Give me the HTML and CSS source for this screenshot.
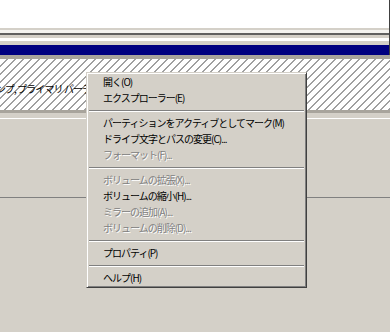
FILE: index.html
```html
<!DOCTYPE html>
<html lang="ja">
<head>
    <meta charset="UTF-8">
    <title>ディスクの管理</title>
    <link rel="stylesheet" href="styles.css">
</head>
<body>
    <div class="top-pane"></div>
    <div class="splitter">
        <div class="s1"></div>
        <div class="s2"></div>
        <div class="s3"></div>
        <div class="s4"></div>
        <div class="s5"></div>
        <div class="s6"></div>
    </div>
    <div class="disk-head"></div>
    <div class="partition">
        <div class="part-text">ンプ, プライマリ パーティション)</div>
    </div>
    <div class="disk-foot"></div>
    <div class="lower">
        <div class="lower-line"></div>
    </div>

    <!-- コンテキストメニュー -->
    <div class="menu">
        <div class="item">開く(O)</div>
        <div class="item">エクスプローラー(E)</div>
        <div class="sep"></div>
        <div class="item">パーティションをアクティブとしてマーク(M)</div>
        <div class="item">ドライブ文字とパスの変更(C)...</div>
        <div class="item disabled">フォーマット(F)...</div>
        <div class="sep"></div>
        <div class="item disabled">ボリュームの拡張(X)...</div>
        <div class="item">ボリュームの縮小(H)...</div>
        <div class="item disabled">ミラーの追加(A)...</div>
        <div class="item disabled">ボリュームの削除(D)...</div>
        <div class="sep"></div>
        <div class="item">プロパティ(P)</div>
        <div class="sep"></div>
        <div class="item">ヘルプ(H)</div>
    </div>
</body>
</html>
```

FILE: styles.css
```css
html, body {
    margin: 0;
    padding: 0;
    height: 100%;
    overflow: hidden;
}
body {
    background-color: #d4d0c8;
    font-family: "Noto Sans CJK JP", "Liberation Sans", sans-serif;
    font-size: 10px;
    color: #000;
}
.top-pane {
    height: 28px;
    background: #fff;
    border-right: 1px solid #404040;
}
.splitter {
    border-right: 1px solid #404040;
}
.s1 { height: 2px; background: #d4d0c8; }
.s2 { height: 3px; background: #f4f3f0; }
.s3 { height: 2px; background: #606060; }
.s4 { height: 3px; background: #d4d0c8; }
.s5 { height: 3px; background: #fff; }
.s6 { height: 4px; background: #d4d0c8; }
.disk-head {
    height: 10px;
    background: #000080;
    border-right: 1px solid #404040;
}
.partition {
    height: 51px;
    border-top: 4px solid #a8a49c;
    border-bottom: 3px solid #a8a49c;
    background-color: #fff;
    background-image: repeating-linear-gradient(135deg, #fff 0, #fff 4.6px, #a0a0a0 4.6px, #a0a0a0 5.66px);
}
.part-text {
    width: 86px;
    overflow: hidden;
    margin-top: 24px;
    line-height: 12px;
    text-indent: -4px;
    white-space: nowrap;
    letter-spacing: -0.9px;
}
.disk-foot {
    height: 5px;
    border-bottom: 1px solid #fff;
}
.lower {
    padding-top: 78px;
}
.lower-line {
    height: 1px;
    background: #808080;
}
.menu {
    position: absolute;
    left: 86px;
    top: 72px;
    width: 217px;
    padding: 1px;
    background: #d4d0c8;
    border-top: 1px solid #d4d0c8;
    border-left: 1px solid #d4d0c8;
    border-right: 1px solid #404040;
    border-bottom: 1px solid #404040;
    box-shadow: inset 1px 1px 0 #fff, inset -1px -1px 0 #808080;
}
.menu .item {
    height: 16px;
    line-height: 16px;
    padding-left: 15px;
    white-space: nowrap;
    overflow: hidden;
    letter-spacing: -1px;
}
.menu .item.disabled {
    color: #808080;
    text-shadow: 1px 1px 0 #fff;
}
.menu .sep {
    height: 9px;
    display: flex;
    align-items: center;
    padding: 0 1px;
}
.menu .sep::before {
    content: "";
    flex: 1;
    height: 1px;
    background: #808080;
    border-bottom: 1px solid #fff;
}
```
